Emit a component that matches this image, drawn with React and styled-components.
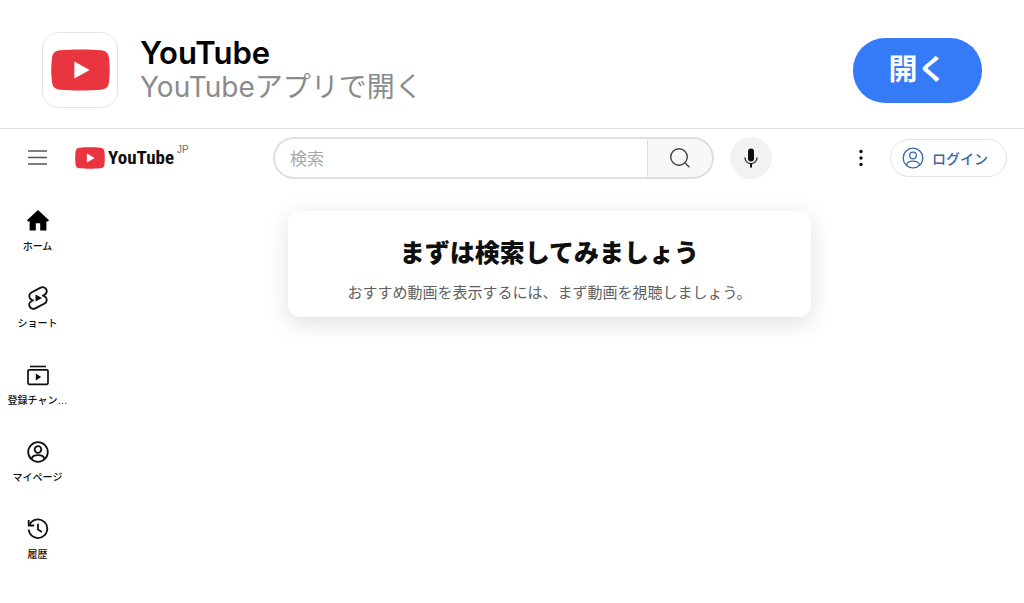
import React from "react"
import styled, { createGlobalStyle } from "styled-components"

const GlobalStyle = createGlobalStyle`
  *,
  *::before,
  *::after {
    box-sizing: border-box;
  }
  body {
    margin: 0;
    background: #fff;
    color: #0f0f0f;
    font-family: "Liberation Sans", "Noto Sans CJK JP", sans-serif;
  }
  button {
    margin: 0;
    padding: 0;
    border: 0;
    background: none;
    color: inherit;
    font: inherit;
    cursor: pointer;
  }
  svg {
    display: block;
  }
`

const Banner = styled.aside`
  display: flex;
  align-items: center;
  padding: 32px 42px 20px;
  border-bottom: 1px solid #dedede;
`

const AppIcon = styled.div`
  display: flex;
  align-items: center;
  justify-content: center;
  width: 76px;
  height: 76px;
  border: 1px solid #e4e4e4;
  border-radius: 17px;
`

const BannerText = styled.div`
  flex: 1;
  margin-left: 22px;
  font-family: Inter, "Noto Sans CJK JP", sans-serif;
`

const BannerTitle = styled.p`
  margin: 0;
  color: #000;
  font-size: 31px;
  font-weight: 600;
  line-height: 34px;
`

const BannerSubtitle = styled.p`
  margin: 0;
  color: #8b8b8d;
  font-size: 28px;
  line-height: 34px;
`

const OpenButton = styled.button`
  width: 129px;
  height: 65px;
  border-radius: 32px;
  background: #357af6;
  color: #fff;
  font-size: 29px;
  font-weight: 700;
  line-height: 32px;
`

const Header = styled.header`
  display: flex;
  align-items: center;
  height: 58px;
  padding: 0 17px 0 27px;
`

const Start = styled.div`
  display: flex;
  align-items: center;
  gap: 27px;
  flex: 0 0 246px;
`

const Logo = styled.a`
  display: flex;
  align-items: center;
  gap: 3px;
  color: #0f0f0f;
  text-decoration: none;
`

const Wordmark = styled.span`
  font-family: "Roboto Condensed", "Liberation Sans Narrow", "Open Sans Condensed", sans-serif;
  font-size: 19px;
  font-weight: 700;
  line-height: 24px;
`

const Region = styled.sup`
  align-self: flex-start;
  color: #707070;
  font-size: 10px;
  line-height: 8px;
`

const SearchForm = styled.form`
  display: flex;
  flex: 0 1 441px;
  height: 42px;
`

const SearchInput = styled.input`
  flex: 1;
  min-width: 0;
  padding: 3px 15px 0;
  border: 2px solid #dfdfdf;
  border-right: 0;
  border-radius: 21px 0 0 21px;
  background: #fff;
  font-family: inherit;
  font-size: 17px;
  outline: none;
  &::placeholder {
    color: #a8a8a8;
    opacity: 1;
  }
`

const SearchButton = styled.button`
  display: flex;
  align-items: center;
  justify-content: center;
  width: 67px;
  border: 2px solid #dfdfdf;
  border-left-width: 1px;
  border-radius: 0 21px 21px 0;
  background: #f8f8f8;
`

const MicButton = styled.button`
  display: flex;
  align-items: center;
  justify-content: center;
  width: 42px;
  height: 42px;
  margin-left: 16px;
  border-radius: 50%;
  background: #f2f2f2;
`

const End = styled.div`
  display: flex;
  align-items: center;
  gap: 17px;
  margin-left: auto;
`

const LoginButton = styled.button`
  display: flex;
  align-items: center;
  gap: 7px;
  height: 38px;
  padding: 0 18px 0 10px;
  border: 1px solid #e2e2e2;
  border-radius: 19px;
  color: #3768a8;
  font-size: 14px;
  font-weight: 500;
`

const Body = styled.div`
  display: flex;
`

const Sidebar = styled.nav`
  display: flex;
  flex-direction: column;
  flex: 0 0 75px;
  padding-top: 22px;
`

const SidebarLink = styled.a`
  display: flex;
  flex-direction: column;
  align-items: center;
  gap: 6px;
  height: 77px;
  color: #0f0f0f;
  font-size: 10px;
  font-weight: 500;
  line-height: 15px;
  text-decoration: none;
  white-space: nowrap;
`

const Main = styled.main`
  flex: 1;
  padding: 24px 32px;
`

const Card = styled.section`
  max-width: 523px;
  margin: 0 auto;
  padding: 24px 16px 13px;
  border-radius: 12px;
  box-shadow: 0 6px 24px rgba(0, 0, 0, 0.13);
  text-align: center;
`

const CardTitle = styled.h1`
  margin: 0;
  font-size: 25px;
  font-weight: 900;
  line-height: 36px;
`

const CardText = styled.p`
  margin: 11px 0 0;
  color: #606060;
  font-size: 15px;
  line-height: 22px;
`

const PlayBadge = ({ width, height }) => (
  <svg width={width} height={height} viewBox="0 0 58 42" preserveAspectRatio="none">
    <path
      fill="#e8353f"
      d="M9 1.300C20 .2 38 .2 49 1.300C54 1.800 56.500 4 57 9C58 17 58 25 57 33C56.500 38 54 40.200 49 40.700C38 41.800 20 41.800 9 40.700C4 40.200 1.500 38 1 33C0 25 0 17 1 9C1.500 4 4 1.800 9 1.300Z"
    />
    <path fill="#fff" d="M23 12.500 38 21 23 29.500Z" />
  </svg>
)

const MenuIcon = () => (
  <svg width="21" height="20" viewBox="0 0 21 20" fill="none" stroke="#555" strokeWidth="1.500">
    <path d="M1 3h19M1 9.500h19M1 16h19" />
  </svg>
)

const SearchIcon = () => (
  <svg width="24" height="24" viewBox="0 0 24 24" fill="none" stroke="#444" strokeWidth="1.400">
    <circle cx="11" cy="11" r="8.300" />
    <path d="m17 17 4.500 4.200" />
  </svg>
)

const MicIcon = () => (
  <svg width="24" height="24" viewBox="0 0 24 24" fill="none">
    <rect x="9" y="2.500" width="6" height="13" rx="3" fill="#0f0f0f" />
    <path d="M6 11.500a6 6.200 0 0 0 12 0" stroke="#333" strokeWidth="1.400" />
    <path d="M12 17.500v4" stroke="#0f0f0f" strokeWidth="2" />
  </svg>
)

const MoreIcon = () => (
  <svg width="24" height="24" viewBox="0 0 24 24" fill="#0f0f0f">
    <circle cx="12" cy="5.500" r="1.700" />
    <circle cx="12" cy="12" r="1.700" />
    <circle cx="12" cy="18.500" r="1.700" />
  </svg>
)

const PersonIcon = ({ size = 24, strokeWidth = 1.8 }) => (
  <svg
    width={size}
    height={size}
    viewBox="0 0 24 24"
    fill="none"
    stroke="currentColor"
    strokeWidth={strokeWidth}
  >
    <circle cx="12" cy="12" r="9.800" />
    <circle cx="12" cy="9.500" r="3.300" />
    <path d="M5.500 19c.6-2.500 3.400-3.800 6.500-3.800s5.900 1.300 6.500 3.800" />
  </svg>
)

const HomeIcon = () => (
  <svg width="24" height="24" viewBox="0 0 24 24" fill="#000">
    <path d="M12 1 1 11.200l1.400 1.600 1.200-.8v9.500h6.200v-7.300h4.400v7.300h6.200V12l1.200.8 1.400-1.600Z" />
  </svg>
)

const ShortsIcon = () => (
  <svg width="24" height="24" viewBox="1 1 22 22" fill="none">
    <path
      stroke="#0f0f0f"
      strokeWidth="1.700"
      strokeLinejoin="round"
      d="M17.770 10.320 16.570 9.820 18 9.060c1.840-.96 2.530-3.230 1.560-5.060s-3.240-2.530-5.070-1.560L6 6.940c-1.290.68-2.070 2.040-2 3.490.07 1.420.93 2.670 2.220 3.250l1.200.5L6 14.930c-1.830.97-2.530 3.240-1.560 5.070.97 1.830 3.240 2.530 5.070 1.560l8.500-4.500c1.290-.68 2.060-2.040 1.990-3.490-.07-1.420-.94-2.680-2.230-3.250Z"
    />
    <path fill="#0f0f0f" d="M9.700 8.700 15.700 12l-6 3.300Z" />
  </svg>
)

const SubscriptionsIcon = () => (
  <svg width="24" height="24" viewBox="0 0 24 24" fill="none">
    <path stroke="#0f0f0f" strokeWidth="1.600" d="M4 3.500h16" />
    <rect
      x="2"
      y="6.800"
      width="20"
      height="14.500"
      rx="1.200"
      stroke="#0f0f0f"
      strokeWidth="1.700"
    />
    <path fill="#0f0f0f" d="M9.800 10.500 15.200 14l-5.400 3.500Z" />
  </svg>
)

const HistoryIcon = () => (
  <svg width="24" height="24" viewBox="0 0 24 24" fill="none" stroke="#0f0f0f" strokeWidth="1.800">
    <path d="M2.700 3v5.500h5.500" />
    <path d="M3.300 8.300A9.300 9.300 0 1 1 2.700 12.500" />
    <path d="M12 6.800v5.700l3.800 2.500" />
  </svg>
)

const links = [
  { label: "ホーム", Icon: HomeIcon },
  { label: "ショート", Icon: ShortsIcon },
  { label: "登録チャン…", Icon: SubscriptionsIcon },
  { label: "マイページ", Icon: PersonIcon },
  { label: "履歴", Icon: HistoryIcon }
]

const App = () => (
  <>
    <GlobalStyle />
    <Banner>
      <AppIcon>
        <PlayBadge width={59} height={42} />
      </AppIcon>
      <BannerText>
        <BannerTitle>YouTube</BannerTitle>
        <BannerSubtitle>YouTubeアプリで開く</BannerSubtitle>
      </BannerText>
      <OpenButton type="button">開く</OpenButton>
    </Banner>
    <Header>
      <Start>
        <button type="button" aria-label="メニュー">
          <MenuIcon />
        </button>
        <Logo href="#">
          <PlayBadge width={30} height={22} />
          <Wordmark>YouTube</Wordmark>
          <Region>JP</Region>
        </Logo>
      </Start>
      <SearchForm role="search" onSubmit={e => e.preventDefault()}>
        <SearchInput type="text" placeholder="検索" aria-label="検索" />
        <SearchButton type="submit" aria-label="検索">
          <SearchIcon />
        </SearchButton>
      </SearchForm>
      <MicButton type="button" aria-label="音声で検索">
        <MicIcon />
      </MicButton>
      <End>
        <button type="button" aria-label="設定">
          <MoreIcon />
        </button>
        <LoginButton type="button">
          <PersonIcon strokeWidth={1.3} />
          ログイン
        </LoginButton>
      </End>
    </Header>
    <Body>
      <Sidebar>
        {links.map(({ label, Icon }) => (
          <SidebarLink href="#" key={label}>
            <Icon />
            {label}
          </SidebarLink>
        ))}
      </Sidebar>
      <Main>
        <Card>
          <CardTitle>まずは検索してみましょう</CardTitle>
          <CardText>おすすめ動画を表示するには、まず動画を視聴しましょう。</CardText>
        </Card>
      </Main>
    </Body>
  </>
)

export default App
